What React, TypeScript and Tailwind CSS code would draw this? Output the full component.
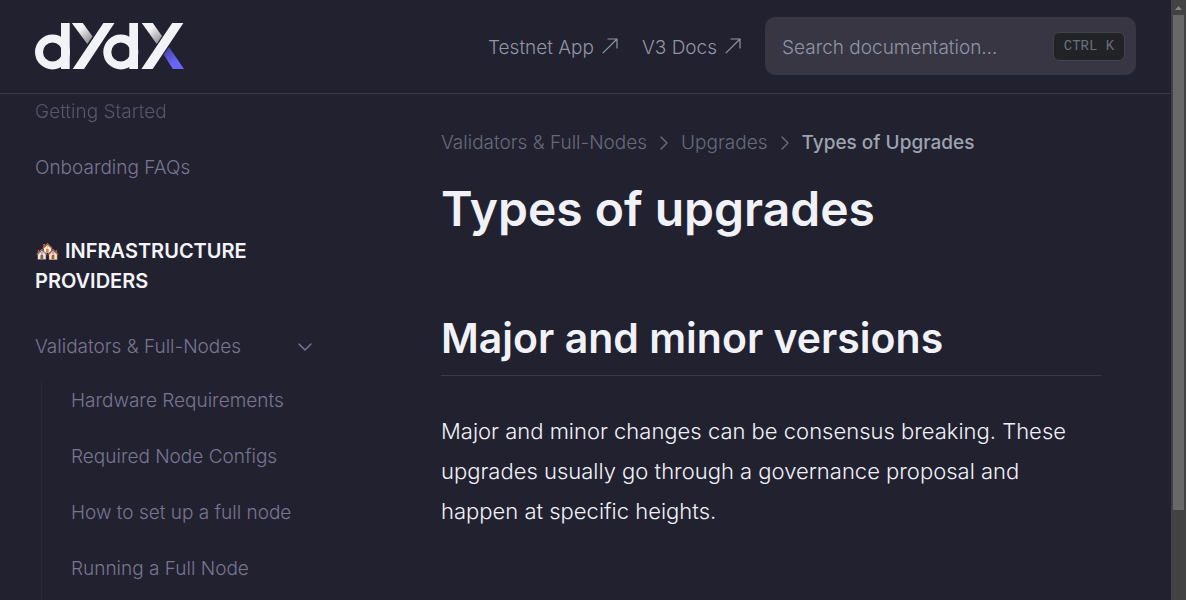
import { ChevronDown, ChevronRight } from "lucide-react";

const topItems = ["Getting Started", "Onboarding FAQs"];
const nodeItems = [
  "Hardware Requirements",
  "Required Node Configs",
  "How to set up a full node",
  "Running a Full Node",
];

function Logo() {
  return (
    <svg viewBox="0 0 149 47" className="h-[47px] w-[149px]" aria-hidden="true">
      <defs>
        <linearGradient id="arm-left" x1="38" y1="2" x2="54" y2="22" gradientUnits="userSpaceOnUse">
          <stop offset="0.3" stopColor="#f4f4f6" />
          <stop offset="1" stopColor="#85858d" />
        </linearGradient>
        <linearGradient id="arm-right" x1="108" y1="2" x2="124" y2="22" gradientUnits="userSpaceOnUse">
          <stop offset="0.3" stopColor="#f4f4f6" />
          <stop offset="1" stopColor="#85858d" />
        </linearGradient>
        <linearGradient id="leg" x1="132" y1="26" x2="144" y2="46" gradientUnits="userSpaceOnUse">
          <stop offset="0" stopColor="#4a47a8" />
          <stop offset="0.7" stopColor="#6966ff" />
        </linearGradient>
      </defs>
      <g fill="none" stroke="#f2f3f6" strokeWidth="8">
        <circle cx="17.500" cy="29" r="13.500" />
        <circle cx="85.800" cy="29" r="13.500" />
      </g>
      <path fill="#f2f3f6" d="M26 0h8.700v46H26zM94.300 0h8.700v46h-8.700z" />
      <path fill="url(#arm-left)" d="M36.800 0h11L57.500 13.500 52.300 21z" />
      <path fill="url(#arm-right)" d="M106.800 0h11L127 13 121.700 21z" />
      <path fill="#f2f3f6" d="M68.400 0h11.100L49 46H37.700zM137.200 0h11.200L117.700 46h-11.300z" />
      <path fill="url(#leg)" d="M134 24L149 46h-11.200L128.700 31.500z" />
    </svg>
  );
}

function ExternalLink({ children }: { children: string }) {
  return (
    <a href="#" className="flex items-center gap-2 pt-1">
      {children}
      <svg viewBox="0 0 16 16" className="mb-1 size-4" fill="none" stroke="currentColor" strokeWidth="1.2" aria-hidden="true">
        <path d="M0.800 15.200L15 1M5.500 1H15v9.500" />
      </svg>
    </a>
  );
}

function Crumb({ children }: { children: string }) {
  return (
    <li className="flex items-center gap-[5px]">
      <a href="#">{children}</a>
      <ChevronRight className="size-6" strokeWidth={1.5} aria-hidden="true" />
    </li>
  );
}

export default function App() {
  return (
    <div className="flex h-screen overflow-hidden bg-[#222130] font-['Inter',sans-serif] text-[19px] font-light text-[#787590]">
      <div className="flex min-w-0 flex-1 flex-col">
        <header className="flex h-[94px] shrink-0 items-center gap-6 border-b border-[#3a3947] px-[35px] pb-px text-[#9095a5]">
          <a href="#" aria-label="dYdX" className="mr-auto">
            <Logo />
          </a>
          <ExternalLink>Testnet App</ExternalLink>
          <ExternalLink>V3 Docs</ExternalLink>
          <label className="flex h-[58px] w-[371px] items-center rounded-[10px] bg-[#383643] pr-[11px] pl-[17px]">
            <input
              type="search"
              aria-label="Search documentation"
              placeholder="Search documentation…"
              className="min-w-0 flex-1 bg-transparent pt-1 outline-none placeholder:text-[#9095a5]"
            />
            <kbd className="flex h-[29px] w-[72px] items-center justify-center rounded-md border border-[#43434a] bg-[#222327] font-['Liberation_Mono',monospace] text-[14px] font-normal text-[#69707f]">
              CTRL K
            </kbd>
          </label>
        </header>

        <div className="flex min-h-0 flex-1">
          <nav aria-label="Documentation" className="w-[352px] shrink-0 overflow-hidden px-[35px]">
            <ul className="-mt-[10px]">
              {topItems.map((item, i) => (
                <li key={item} className="flex h-14 items-center">
                  <a href="#" className={i === 0 ? "bg-linear-to-b from-[#4c4a5c] to-[#64617a] bg-clip-text text-transparent" : ""}>
                    {item}
                  </a>
                </li>
              ))}
            </ul>
            <h2 className="mt-10 w-[280px] text-[20px] leading-[30px] font-semibold text-[#f4f4f8]">
              🏘️ INFRASTRUCTURE PROVIDERS
            </h2>
            <button type="button" className="mt-[23px] flex h-14 w-full items-center justify-between">
              Validators &amp; Full-Nodes
              <ChevronDown className="size-6" strokeWidth={1.5} aria-hidden="true" />
            </button>
            <ul className="mt-1.5 ml-[6px] flex flex-col gap-4 border-l border-[#292835] pb-4 pl-[29px]">
              {nodeItems.map((item) => (
                <li key={item} className="flex h-10 items-center">
                  <a href="#">{item}</a>
                </li>
              ))}
            </ul>
          </nav>

          <main className="min-w-0 flex-1 pt-[35px] pr-[70px] pl-[89px] text-[#f0f2f8]">
            <nav aria-label="Breadcrumb">
              <ol className="flex items-center gap-[5px] leading-7 text-[#666a79]">
                <Crumb>Validators &amp; Full-Nodes</Crumb>
                <Crumb>Upgrades</Crumb>
                <li className="font-medium text-[#9da3b1]">Types of Upgrades</li>
              </ol>
            </nav>
            <h1 className="mt-5 text-[48px] leading-[64px] font-semibold">Types of upgrades</h1>
            <h2 className="mt-[66px] border-b border-[#3a3947] pb-[6px] text-[41px] leading-[62px] font-semibold">
              Major and minor versions
            </h2>
            <p className="mt-[35px] text-[22px] leading-10">
              Major and minor changes can be consensus breaking. These upgrades usually go through a governance proposal and
              happen at specific heights.
            </p>
          </main>
        </div>
      </div>

      <div aria-hidden="true" className="flex w-[15px] shrink-0 flex-col items-center bg-[#424242]">
        <svg viewBox="0 0 15 15" className="size-[15px] shrink-0">
          <path d="M4 10h7L7.500 6z" fill="#868686" />
        </svg>
        <div className="h-[495px] w-[11px] bg-[#686868]" />
      </div>
    </div>
  );
}
